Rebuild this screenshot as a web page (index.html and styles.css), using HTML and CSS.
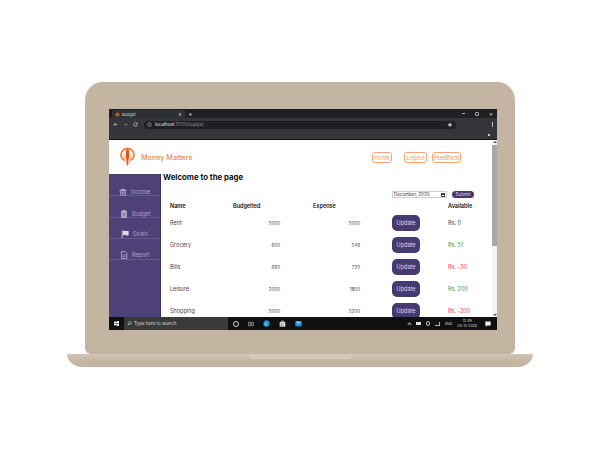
FILE: index.html
```html
<!DOCTYPE html>
<html lang="en">
<head>
    <meta charset="UTF-8">
    <title>Budget</title>
    <link rel="stylesheet" href="styles.css">
</head>
<body>

<div class="laptop">
    <div class="lid">
        <div class="screen">
            <div class="tab-strip">
                <div class="tab">
                    <svg class="tab-icon" viewBox="0 0 10 10"><circle cx="5" cy="5" r="4" fill="#e8742a"/><path d="M5 1v8M2 4l3 2 3-2" stroke="#2f3033" fill="none"/></svg>
                    <span class="tab-title">Budget</span>
                    <span class="tab-close">×</span>
                </div>
                <span class="tab-new">+</span>
                <div class="win-controls">
                    <span class="win-min"></span>
                    <span class="win-max"></span>
                    <span class="win-close">×</span>
                </div>
            </div>
            <div class="toolbar">
                <svg class="nav-icon" viewBox="0 0 10 10"><path d="M9 5H2M5 2 2 5l3 3" stroke="#c4c7c5" fill="none" stroke-width="1.3"/></svg>
                <svg class="nav-icon" viewBox="0 0 10 10"><path d="M1 5h7M5 2l3 3-3 3" stroke="#77797c" fill="none" stroke-width="1.3"/></svg>
                <svg class="nav-icon" viewBox="0 0 10 10"><path d="M8.5 5A3.5 3.5 0 1 1 7.4 2.5M8.5 1v2.5H6" stroke="#d6d8d9" fill="none" stroke-width="1.2"/></svg>
                <div class="address">
                    <svg class="site-icon" viewBox="0 0 10 10"><circle cx="5" cy="5" r="3.8" stroke="#c4c7c5" fill="none"/><path d="M5 4.5V7M5 3v.8" stroke="#c4c7c5"/></svg>
                    <span class="host">localhost</span><span class="path">:3000/budget</span>
                    <span class="star">★</span>
                </div>
                <span class="kebab"></span>
            </div>
            <div class="bookmarks"><span class="bookmark-dot"></span></div>

            <div class="page">
                <div class="page-content">
                    <header class="site-header">
                        <div class="brand">
                            <svg class="logo" viewBox="0 0 15 20">
                                <path d="M4.300 13.600A6.500 6.500 0 1 1 10.700 13.600" fill="none" stroke="#f27a26" stroke-width="1.700"/>
                                <path d="M7.500 20 5.900 10V3.500L7.500 1.500l1.600 2V10Z" fill="#e9511c"/>
                                <path d="M3.800 7.500C4 11 5.500 14.500 6.800 17.500M11.200 7.500C11 11 9.500 14.500 8.200 17.500" fill="none" stroke="#f59a4a" stroke-width=".9"/>
                            </svg>
                            <span class="brand-name">Money Matters</span>
                        </div>
                        <nav class="site-nav">
                            <a class="nav-btn nav-home">Home</a>
                            <a class="nav-btn nav-logout">Logout</a>
                            <a class="nav-btn nav-feedback">FeedBack</a>
                        </nav>
                    </header>
                    <div class="page-body">
                        <aside class="sidebar">
                            <div class="side-item">
                                <svg class="side-icon" viewBox="0 0 10 10"><path d="M5 .5 9.500 3v1H.5V3ZM1.500 4.800h1.500v3H1.500ZM4.250 4.800h1.500v3h-1.500ZM7 4.800h1.500v3H7ZM.5 8.300h9v1.200h-9Z" fill="#b6b1cd"/></svg>
                                <span>Income</span>
                            </div>
                            <div class="side-item item-budget">
                                <svg class="side-icon" viewBox="0 0 10 10"><path d="M3.500 1V0h3v1H8.500v9h-7V1ZM3 3.500h4v.7H3ZM3 5.300h4V6H3ZM3 7.100h4v.7H3Z" fill="#b6b1cd" fill-rule="evenodd"/></svg>
                                <span>Budget</span>
                            </div>
                            <div class="side-item item-goals">
                                <svg class="side-icon" viewBox="0 0 10 10"><path d="M1 .5h1V10H1ZM2.500 1C5 .2 6 2 9.500 1v5.500C6 7.500 5 5.700 2.500 6.500Z" fill="#dcd9e8"/></svg>
                                <span>Goals</span>
                            </div>
                            <div class="side-item item-report">
                                <svg class="side-icon" viewBox="0 0 10 10"><path d="M2 .5h4l2.500 2.500v6.500H2Z" fill="none" stroke="#c4c0d8" stroke-width="1"/><path d="M3.500 5h3.200M3.500 7h3.200" stroke="#c4c0d8" stroke-width=".8"/></svg>
                                <span>Report</span>
                            </div>
                        </aside>
                        <main class="main">
                            <h1 class="title">Welcome to the page</h1>
                            <div class="month-form">
                                <div class="month-input">
                                    <span>December, 2020</span>
                                    <span class="cal-icon"></span>
                                </div>
                                <span class="submit-btn">Submit</span>
                            </div>
                            <div class="budget-table">
                                <div class="table-row head-row">
                                    <span>Name</span>
                                    <span>Budgetted</span>
                                    <span class="head-expense">Expense</span>
                                    <span></span>
                                    <span>Available</span>
                                </div>
                                <div class="table-row">
                                    <span>Rent</span>
                                    <span class="amount">5000</span>
                                    <span class="amount">5000</span>
                                    <span class="update-btn">Update</span>
                                    <span class="avail">Rs. 0</span>
                                </div>
                                <div class="table-row">
                                    <span>Grocery</span>
                                    <span class="amount">600</span>
                                    <span class="amount">549</span>
                                    <span class="update-btn">Update</span>
                                    <span class="avail avail-pos">Rs. 51</span>
                                </div>
                                <div class="table-row">
                                    <span>Bills</span>
                                    <span class="amount">690</span>
                                    <span class="amount">720</span>
                                    <span class="update-btn">Update</span>
                                    <span class="avail avail-neg">Rs. -30</span>
                                </div>
                                <div class="table-row">
                                    <span>Leisure</span>
                                    <span class="amount">2000</span>
                                    <span class="amount">1800</span>
                                    <span class="update-btn">Update</span>
                                    <span class="avail avail-pos">Rs. 200</span>
                                </div>
                                <div class="table-row">
                                    <span>Shopping</span>
                                    <span class="amount">5000</span>
                                    <span class="amount">5200</span>
                                    <span class="update-btn">Update</span>
                                    <span class="avail avail-neg">Rs. -200</span>
                                </div>
                            </div>
                        </main>
                    </div>
                </div>
                <div class="scrollbar">
                    <span class="scroll-up"></span>
                    <span class="scroll-thumb"></span>
                    <span class="scroll-down"></span>
                </div>
            </div>

            <div class="taskbar">
                <svg class="win-logo" viewBox="0 0 10 10"><path d="M0 1.500 4.300.9v3.800H0ZM4.900.8 10 0v4.700H4.900ZM0 5.300h4.300v3.800L0 8.500ZM4.900 5.300H10V10l-5.100-.8Z" fill="#fff"/></svg>
                <div class="search-box">
                    <svg class="search-icon" viewBox="0 0 10 10"><circle cx="6" cy="4" r="2.800" fill="none" stroke="#ddd"/><path d="M4 6 1 9" stroke="#ddd" stroke-width="1.200"/></svg>
                    <span>Type here to search</span>
                </div>
                <div class="task-icons">
                    <span class="cortana"></span>
                    <svg class="task-view" viewBox="0 0 10 10"><path d="M1 2h3v6H1ZM6 2h3v6H6Z" fill="none" stroke="#ccc"/></svg>
                    <svg class="task-app" viewBox="0 0 10 10"><circle cx="5" cy="5" r="4.500" fill="#1c86d8"/><path d="M2 6c0-3 5-4 6.500-1H4c0 2 2 2.500 4 1.800C6.500 9.500 2 9 2 6Z" fill="#48d6a0"/></svg>
                    <svg class="task-app" viewBox="0 0 10 10"><path d="M1 3h8v6.500H1Z" fill="#f2f2f2"/><path d="M2.500 4.500h2v2h-2Z" fill="#e8502a"/><path d="M5.500 4.500h2v2h-2Z" fill="#76b82a"/><path d="M2.500 7h2v1.800h-2Z" fill="#1c86d8"/><path d="M5.500 7h2v1.800h-2Z" fill="#f5b800"/><path d="M3.500 3V1.500h3V3" fill="none" stroke="#f2f2f2"/></svg>
                    <svg class="task-app" viewBox="0 0 10 10"><path d="M.5 2h9v7h-9Z" fill="#1c9be0"/><path d="M.5 2 5 5.500 9.500 2Z" fill="#8fd4f5"/></svg>
                </div>
                <div class="tray">
                    <span class="tray-chevron"></span>
                    <span class="tray-box"></span>
                    <span class="tray-ring"></span>
                    <span class="tray-wifi"></span>
                    <span class="tray-lang">ENG</span>
                    <div class="tray-clock">
                        <span>12:49</span>
                        <span>24-12-2020</span>
                    </div>
                    <svg class="tray-note" viewBox="0 0 10 10"><path d="M.5 1h9v6.500H4L2 9.500v-2H.5Z" fill="#eee"/></svg>
                </div>
            </div>
        </div>
    </div>
    <div class="base">
        <div class="base-notch"></div>
    </div>
</div>

</body>
</html>
```

FILE: styles.css
```css
* {
    box-sizing: border-box;
}
body {
    margin: 0;
    background-color: white;
    font-family: Inter, "Liberation Sans", sans-serif;
}
.laptop {
    width: 466px;
    margin: 82px auto 0;
    display: flex;
    flex-direction: column;
    align-items: center;
}
.lid {
    width: 430px;
    height: 272px;
    padding: 27px 18px 24px 24px;
    background-color: #c4b4a2;
    border-radius: 18px 18px 6px 6px;
}
.screen {
    height: 221px;
    display: flex;
    flex-direction: column;
    background-color: #111;
    overflow: hidden;
}
.base {
    width: 466px;
    height: 13px;
    background: linear-gradient(#d2c4b3, #c6b7a5 50%, #c2b29f);
    border-radius: 0 0 16px 16px / 0 0 13px 13px;
}
.base-notch {
    width: 102px;
    height: 5px;
    margin-left: 183px;
    background-color: #d6c9b8;
    border-radius: 0 0 3px 3px;
}

/* browser */
.tab-strip {
    height: 9px;
    display: flex;
    align-items: flex-end;
    background-color: #1f2023;
    color: #d8d8d8;
}
.tab {
    width: 73px;
    height: 8px;
    margin-left: 3px;
    padding: 0 3px;
    display: flex;
    align-items: center;
    gap: 2px;
    background-color: #2f3033;
    border-radius: 2px 2px 0 0;
    font-size: 4px;
}
.tab-icon {
    width: 5px;
    height: 5px;
}
.tab-title {
    flex: 1;
}
.tab-close {
    font-size: 6px;
    line-height: 6px;
}
.tab-new {
    margin-left: 3px;
    font-size: 7px;
    line-height: 8px;
}
.win-controls {
    margin-left: auto;
    height: 9px;
    padding-right: 4px;
    display: flex;
    align-items: center;
    gap: 10px;
}
.win-min {
    width: 3px;
    height: 1px;
    background-color: #aaa;
}
.win-max {
    width: 4px;
    height: 4px;
    border: 1px solid #aaa;
    border-radius: 1px;
}
.win-close {
    font-size: 6px;
    line-height: 6px;
}
.toolbar {
    height: 13px;
    padding: 0 4px;
    display: flex;
    align-items: center;
    gap: 5px;
    background-color: #35363a;
}
.nav-icon {
    width: 5px;
    height: 5px;
}
.address {
    width: 312px;
    height: 8px;
    margin-left: 1px;
    padding: 0 3px;
    display: flex;
    align-items: center;
    background-color: #1f2023;
    border-radius: 4px;
    font-size: 4.5px;
}
.site-icon {
    width: 5px;
    height: 5px;
    margin-right: 3px;
}
.host {
    color: #e8e8e8;
}
.path {
    color: #8d8f92;
}
.star {
    margin-left: auto;
    color: #ccc;
    font-size: 6px;
}
.kebab {
    width: 1px;
    height: 5px;
    margin-left: 31px;
    background-color: #bbb;
}
.bookmarks {
    height: 9px;
    padding-right: 7px;
    display: flex;
    justify-content: flex-end;
    align-items: center;
    background-color: #35363a;
    border-bottom: 1px solid #17181a;
}
.bookmark-dot {
    width: 2px;
    height: 2px;
    background-color: #c8c8c8;
}

/* page */
.page {
    flex: 1;
    min-height: 0;
    display: flex;
    background-color: white;
}
.page-content {
    flex: 1;
    min-width: 0;
    display: flex;
    flex-direction: column;
    overflow: hidden;
}
.site-header {
    height: 34px;
    flex-shrink: 0;
    display: flex;
    align-items: center;
    padding-left: 11px;
}
.brand {
    display: flex;
    align-items: center;
    gap: 6px;
}
.logo {
    width: 15px;
    height: 20px;
    margin-top: -1px;
}
.brand-name {
    color: #ee8a54;
    font-size: 7.200px;
    font-weight: 500;
}
.site-nav {
    margin-left: auto;
    margin-right: 31px;
    margin-top: 1px;
    display: flex;
}
.nav-btn {
    height: 11px;
    display: flex;
    justify-content: center;
    align-items: center;
    border: 1px solid #f6a56e;
    border-radius: 3px;
    color: #f09a62;
    font-size: 5.500px;
}
.nav-home {
    width: 20px;
    margin-right: 12px;
}
.nav-logout {
    width: 23px;
    margin-right: 5px;
}
.nav-feedback {
    width: 29px;
}
.page-body {
    flex: 1;
    min-height: 0;
    display: flex;
}
.sidebar {
    width: 52px;
    flex-shrink: 0;
    background-color: #4e4178;
    border-right: 1px solid #3a2f5e;
}
.side-item {
    height: 22px;
    padding: 0 0 0 10px;
    display: flex;
    align-items: flex-end;
    gap: 4px;
    border-bottom: 1px solid #65598c;
    color: #a9a3c6;
    font-size: 5.500px;
    line-height: 6px;
}
.item-budget {
    padding-left: 11px;
}
.item-goals {
    height: 21px;
    padding-left: 12px;
    padding-bottom: 1px;
}
.item-report {
    height: 21px;
    padding-left: 11px;
    padding-bottom: 1px;
}
.side-icon {
    width: 8px;
    height: 8px;
    margin-bottom: -1px;
}
.main {
    flex: 1;
    min-width: 0;
    padding-left: 3px;
}
.title {
    margin: 0 0 0 -1px;
    font-size: 7.800px;
    line-height: 7px;
    font-weight: 700;
    color: #111;
}
.month-form {
    height: 7px;
    margin-top: 10px;
    padding-right: 18px;
    display: flex;
    justify-content: flex-end;
    gap: 5px;
}
.month-input {
    width: 55px;
    padding: 0 1px;
    display: flex;
    justify-content: space-between;
    align-items: center;
    border: 1px solid #cfcce0;
    color: #333;
    font-size: 4.500px;
}
.cal-icon {
    width: 4px;
    height: 4px;
    border: 1px solid #444;
    border-top-width: 2px;
}
.submit-btn {
    width: 22px;
    display: flex;
    justify-content: center;
    align-items: center;
    background-color: #43376f;
    border-radius: 4px;
    color: #ddd;
    font-size: 4.500px;
}
.budget-table {
    margin-top: 4px;
    padding-left: 6px;
    color: #444;
    font-size: 5.500px;
}
.table-row {
    height: 22px;
    display: grid;
    grid-template-columns: 63px 47px 80px 88px 1fr;
    align-items: center;
}
.head-row {
    height: 8px;
    margin-bottom: 2px;
    color: #111;
    font-weight: 600;
}
.head-expense {
    padding-left: 33px;
}
.amount {
    text-align: right;
    font-size: 4.500px;
}
.update-btn {
    width: 28px;
    height: 16px;
    margin-left: 32px;
    display: flex;
    justify-content: center;
    align-items: center;
    background-color: #463a70;
    border-radius: 5px;
    color: #dedbe9;
    font-size: 5.500px;
}
.avail-pos {
    color: #2b9a45;
}
.avail-neg {
    color: #f03a48;
}
.scrollbar {
    width: 5px;
    flex-shrink: 0;
    padding-top: 1px;
    display: flex;
    flex-direction: column;
    align-items: center;
    background-color: #f4f4f4;
}
.scroll-up {
    border: 2px solid transparent;
    border-top: 0;
    border-bottom: 2px solid #555;
}
.scroll-thumb {
    width: 5px;
    height: 101px;
    margin-top: 2px;
    background-color: #a8a8a8;
}
.scroll-down {
    margin-top: auto;
    margin-bottom: 1px;
    border: 2px solid transparent;
    border-bottom: 0;
    border-top: 2px solid #555;
}

/* taskbar */
.taskbar {
    height: 13px;
    flex-shrink: 0;
    display: flex;
    align-items: center;
    background-color: #101010;
    color: #ddd;
}
.win-logo {
    width: 5px;
    height: 5px;
    margin: 0 5px;
}
.search-box {
    width: 104px;
    height: 13px;
    padding-left: 3px;
    display: flex;
    align-items: center;
    gap: 2px;
    background-color: #3a3a3a;
    font-size: 4.500px;
}
.search-icon {
    width: 5px;
    height: 5px;
}
.task-icons {
    padding-left: 5px;
    display: flex;
    align-items: center;
    gap: 9px;
}
.cortana {
    width: 6px;
    height: 6px;
    border: 1px solid #ddd;
    border-radius: 50%;
}
.task-view {
    width: 6px;
    height: 6px;
}
.task-app {
    width: 7px;
    height: 7px;
}
.tray {
    margin-left: auto;
    padding-right: 6px;
    display: flex;
    align-items: center;
    gap: 5px;
    font-size: 3.500px;
}
.tray-chevron {
    width: 3px;
    height: 3px;
    margin-top: 2px;
    border-top: 1px solid #bbb;
    border-left: 1px solid #bbb;
    transform: rotate(45deg);
}
.tray-box {
    width: 5px;
    height: 3px;
    background-color: #ddd;
}
.tray-ring {
    width: 4px;
    height: 5px;
    border: 1px solid #bbb;
    border-radius: 2px;
}
.tray-wifi {
    width: 5px;
    height: 4px;
    border-right: 1px solid #bbb;
    border-bottom: 1px solid #bbb;
}
.tray-clock {
    display: flex;
    flex-direction: column;
    align-items: center;
    line-height: 5px;
}
.tray-note {
    width: 6px;
    height: 6px;
    margin-left: 3px;
}
```
